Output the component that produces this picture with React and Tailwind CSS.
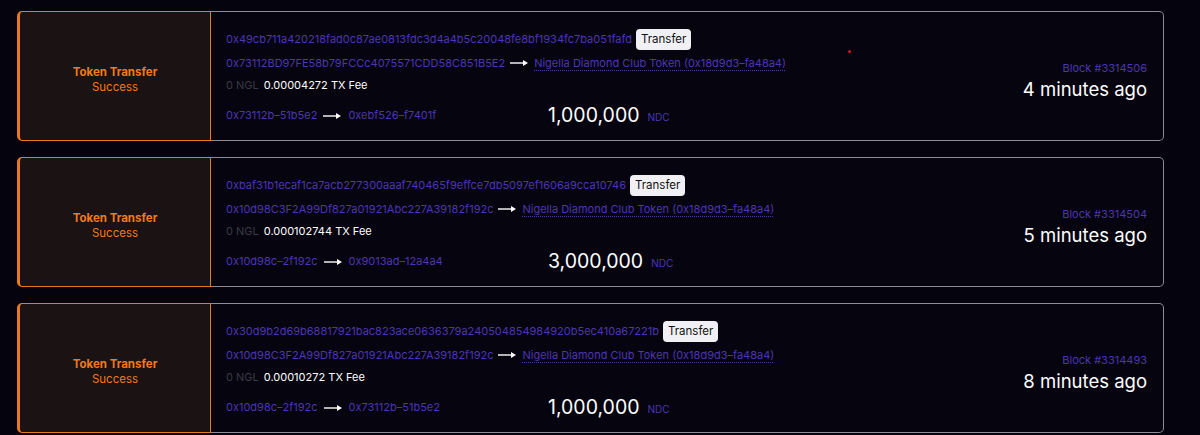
import React from "react";

const rows = [
  {
    hash: "0x49cb711a420218fad0c87ae0813fdc3d4a4b5c20048fe8bf1934fc7ba051fafd",
    from: "0x73112BD97FE58b79FCCc4075571CDD58C851B5E2",
    fee: "0.00004272",
    shortFrom: "0x73112b–51b5e2",
    shortTo: "0xebf526–f7401f",
    amount: "1,000,000",
    block: "3314506",
    ago: "4 minutes ago",
  },
  {
    hash: "0xbaf31b1ecaf1ca7acb277300aaaf740465f9effce7db5097ef1606a9cca10746",
    from: "0x10d98C3F2A99Df827a01921Abc227A39182f192c",
    fee: "0.000102744",
    shortFrom: "0x10d98c–2f192c",
    shortTo: "0x9013ad–12a4a4",
    amount: "3,000,000",
    block: "3314504",
    ago: "5 minutes ago",
  },
  {
    hash: "0x30d9b2d69b68817921bac823ace0636379a240504854984920b5ec410a67221b",
    from: "0x10d98C3F2A99Df827a01921Abc227A39182f192c",
    fee: "0.00010272",
    shortFrom: "0x10d98c–2f192c",
    shortTo: "0x73112b–51b5e2",
    amount: "1,000,000",
    block: "3314493",
    ago: "8 minutes ago",
  },
];

function Arrow() {
  return (
    <svg width="19" height="8" viewBox="0 0 19 8" className="shrink-0">
      <path d="M0 4 H16" stroke="#ffffff" strokeWidth="1.4" />
      <path d="M13 1 L18 4 L13 7 Z" fill="#ffffff" />
    </svg>
  );
}

function Card({ r }) {
  return (
    <div className="flex h-[130px] w-[1147px]">
      <div className="flex w-[194px] shrink-0 flex-col items-center justify-center rounded-l-[5px] border border-l-[3px] border-[#e77a1f] bg-[#1a1213] pt-[7px]">
        <div className="text-[11.5px] font-bold leading-[15px] text-[#f07a1c]">Token Transfer</div>
        <div className="text-[11.5px] leading-[15px] text-[#f07a1c]">Success</div>
      </div>
      <div className="flex flex-1 items-center rounded-r-[5px] border border-l-0 border-[#8c8b98] bg-[#05040f] pl-[15px] pr-[16px]">
        <div className="flex flex-1 flex-col pt-[2px]">
          <div className="flex items-center gap-[4px] text-[11px] text-[#4d36b4]">
            <span>{r.hash}</span>
            <span className="rounded-[4px] bg-[#f1f1f5] px-[5px] py-[3px] text-[11.5px] leading-[15px] text-[#111]">Transfer</span>
          </div>
          <div className="mt-[5px] flex items-center gap-[5px] text-[11px] text-[#4d36b4]">
            <span>{r.from}</span>
            <Arrow />
            <span className="underline decoration-dotted underline-offset-[3px]">Nigella Diamond Club Token (0x18d9d3–fa48a4)</span>
          </div>
          <div className="mt-[6px] flex items-center gap-[5px] text-[11px]">
            <span className="text-[#3b3a44]">0 NGL</span>
            <span className="text-white">{r.fee} TX Fee</span>
          </div>
          <div className="mt-[12px] flex items-center">
            <div className="flex w-[322px] items-center gap-[6px] text-[11px] text-[#4d36b4]">
              <span>{r.shortFrom}</span>
              <Arrow />
              <span>{r.shortTo}</span>
            </div>
            <span className="text-[19.5px] leading-none text-white">{r.amount}</span>
            <span className="ml-[8px] mt-[3px] text-[10px] text-[#4d36b4]">NDC</span>
          </div>
        </div>
        <div className="flex flex-col items-end pt-[8px]">
          <div className="text-[11px] leading-[15px] text-[#4d36b4]">Block #{r.block}</div>
          <div className="mt-[2px] text-[18.5px] leading-[22px] text-white">{r.ago}</div>
        </div>
      </div>
    </div>
  );
}

export default function App() {
  return (
    <div
      className="h-[435px] w-[1200px] overflow-hidden bg-[#04030e] pl-[17px] pt-[11px]"
      style={{ fontFamily: "Inter, 'Noto Sans', sans-serif" }}
    >
      <div className="flex flex-col gap-[16px]">
        {rows.map((r) => (
          <Card key={r.block} r={r} />
        ))}
      </div>
      <div className="absolute left-[848px] top-[50px] h-[3px] w-[3px] rounded-full bg-[#e0102a]" />
    </div>
  );
}
